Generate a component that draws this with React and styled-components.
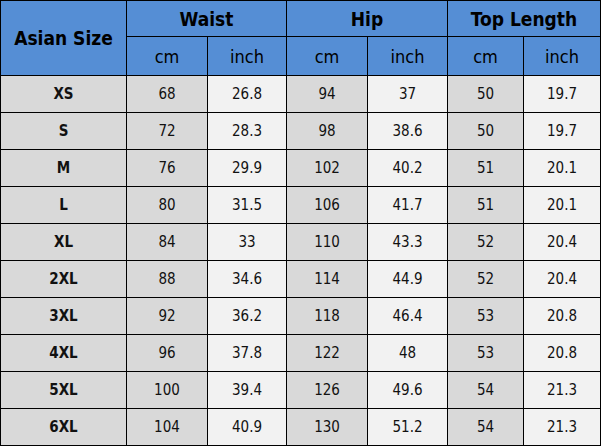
import React from "react";
import styled, { createGlobalStyle } from "styled-components";

const Global = createGlobalStyle`
  html, body { margin: 0; padding: 0; background: #ffffff; }
  body { font-family: "DejaVu Sans Condensed", "Noto Sans", "DejaVu Sans", sans-serif; }
`;

const Table = styled.table`
  border-collapse: collapse;
  table-layout: fixed;
  width: 600px;
  color: #111;
`;

const HeadCell = styled.th`
  background: #558ed5;
  border: 1px solid #000;
  padding: 0;
  text-align: center;
  vertical-align: middle;
  font-size: ${(p) => (p.$bold ? 19 : 18)}px;
  font-weight: ${(p) => (p.$bold ? 700 : 400)};
  color: #000;
  height: ${(p) => p.$h}px;
`;

const Cell = styled.td`
  border: 1px solid #000;
  padding: 0;
  height: 36px;
  text-align: center;
  vertical-align: middle;
  font-size: 15px;
  font-weight: ${(p) => (p.$bold ? 700 : 400)};
  background: ${(p) => (p.$light ? "#f2f2f2" : "#d9d9d9")};
`;

const rows = [
  ["XS", 68, "26.8", 94, "37", 50, "19.7"],
  ["S", 72, "28.3", 98, "38.6", 50, "19.7"],
  ["M", 76, "29.9", 102, "40.2", 51, "20.1"],
  ["L", 80, "31.5", 106, "41.7", 51, "20.1"],
  ["XL", 84, "33", 110, "43.3", 52, "20.4"],
  ["2XL", 88, "34.6", 114, "44.9", 52, "20.4"],
  ["3XL", 92, "36.2", 118, "46.4", 53, "20.8"],
  ["4XL", 96, "37.8", 122, "48", 53, "20.8"],
  ["5XL", 100, "39.4", 126, "49.6", 54, "21.3"],
  ["6XL", 104, "40.9", 130, "51.2", 54, "21.3"],
];

const widths = [126, 81, 79, 81, 80, 76, 77];

export default function App() {
  return (
    <>
      <Global />
      <Table>
        <colgroup>
          {widths.map((w, i) => (
            <col key={i} style={{ width: w }} />
          ))}
        </colgroup>
        <thead>
          <tr>
            <HeadCell $bold rowSpan={2} $h={35}>Asian Size</HeadCell>
            <HeadCell $bold colSpan={2} $h={35}>Waist</HeadCell>
            <HeadCell $bold colSpan={2} $h={35}>Hip</HeadCell>
            <HeadCell $bold colSpan={2} $h={35}>Top Length</HeadCell>
          </tr>
          <tr>
            {["cm", "inch", "cm", "inch", "cm", "inch"].map((t, i) => (
              <HeadCell key={i} $h={38}>{t}</HeadCell>
            ))}
          </tr>
        </thead>
        <tbody>
          {rows.map((r) => (
            <tr key={r[0]}>
              {r.map((v, i) => (
                <Cell key={i} $bold={i === 0} $light={i > 0 && i % 2 === 0}>
                  {v}
                </Cell>
              ))}
            </tr>
          ))}
        </tbody>
      </Table>
    </>
  );
}
